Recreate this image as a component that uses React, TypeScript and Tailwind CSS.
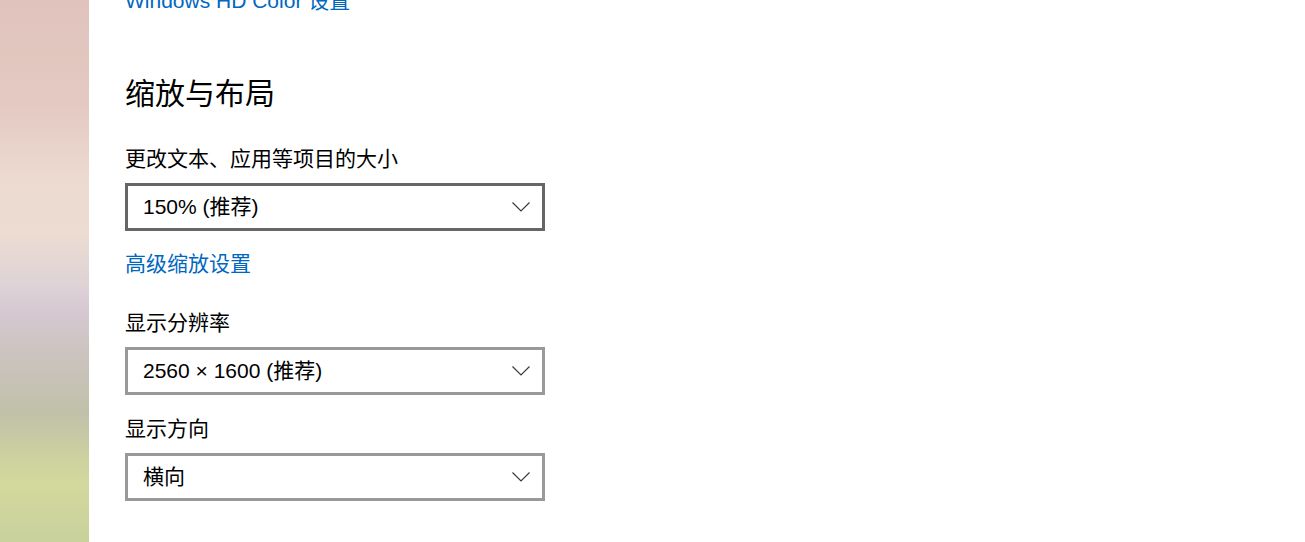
import React from 'react';

const font = { fontFamily: '"Liberation Sans", "Noto Sans CJK SC", sans-serif' };

function Chevron() {
  return (
    <svg width="18" height="10" viewBox="0 0 18 10" className="shrink-0">
      <polyline points="0.5,0.5 9,9 17.5,0.5" fill="none" stroke="#3a3a3a" strokeWidth="1.2" />
    </svg>
  );
}

function Select({ value, active }: { value: string; active?: boolean }) {
  return (
    <div
      className={`w-[420px] h-[48px] border-[3px] bg-white flex items-center justify-between pl-[15px] pr-[12px] ${
        active ? 'border-[#666666]' : 'border-[#999999]'
      }`}
    >
      <span className="text-[21px] leading-[30px] text-black">{value}</span>
      <Chevron />
    </div>
  );
}

export default function App() {
  return (
    <div className="flex w-[1305px] h-[542px] overflow-hidden bg-white" style={font}>
      <div className="w-[89px] h-full shrink-0 bg-[linear-gradient(to_bottom,#dfc3bc_0%,#e4cac2_20%,#ecdad0_33%,#ecdcd2_43%,#ddd2d6_53%,#d6c9d2_57%,#cbc3be_66%,#c0c1aa_76%,#cdd29f_85%,#d3d89c_89%,#c9d19c_100%)]" />
      <div className="flex-1 pl-[36px] flex flex-col items-start -mt-[14px]">
        <a className="text-[21px] leading-[30px] text-[#0067c0]">Windows HD Color 设置</a>
        <h2 className="mt-[58px] text-[30px] leading-[40px] text-black font-normal">缩放与布局</h2>
        <div className="mt-[30px] text-[21px] leading-[30px] text-black">更改文本、应用等项目的大小</div>
        <div className="mt-[9px]">
          <Select value="150% (推荐)" active />
        </div>
        <a className="mt-[18px] text-[21px] leading-[30px] text-[#0067c0]">高级缩放设置</a>
        <div className="mt-[29px] text-[21px] leading-[30px] text-black">显示分辨率</div>
        <div className="mt-[9px]">
          <Select value="2560 × 1600 (推荐)" />
        </div>
        <div className="mt-[19px] text-[21px] leading-[30px] text-black">显示方向</div>
        <div className="mt-[9px]">
          <Select value="横向" />
        </div>
      </div>
    </div>
  );
}
